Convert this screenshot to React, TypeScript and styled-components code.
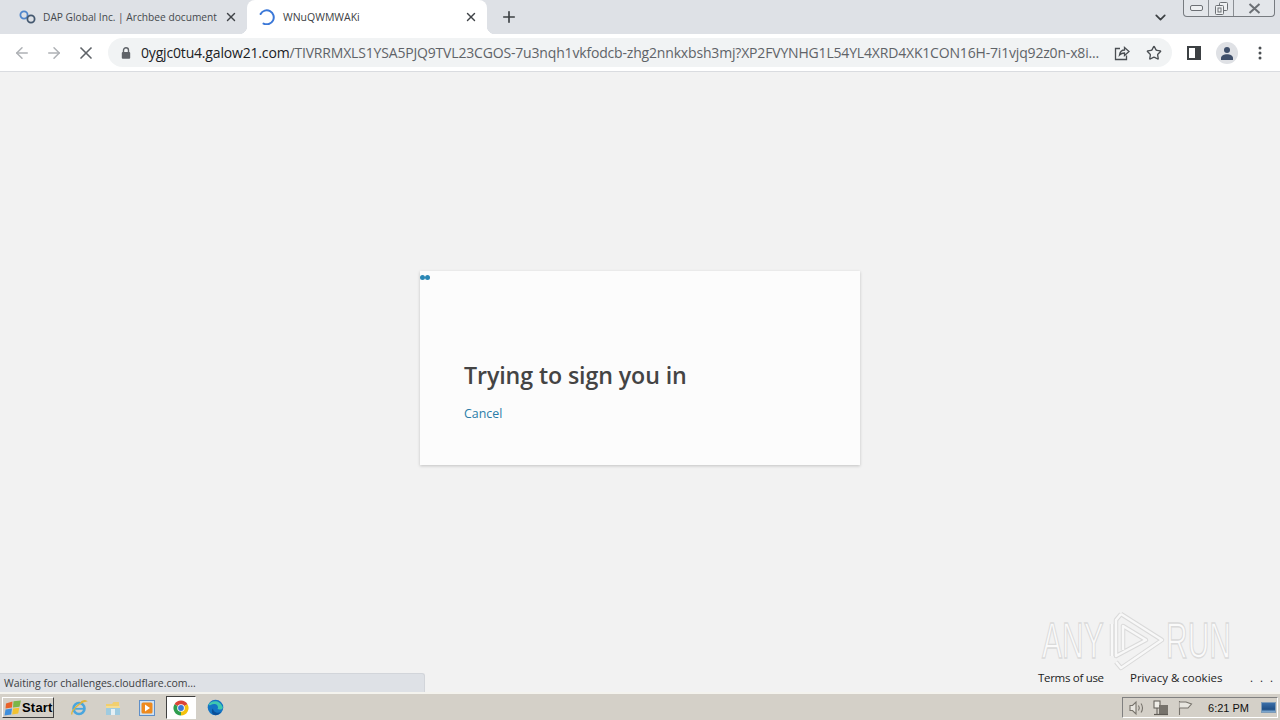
import styled, { createGlobalStyle } from "styled-components";
import { ArrowLeft, ArrowRight, ChevronDown, Plus, Star, X } from "lucide-react";

const GlobalStyle = createGlobalStyle`
  html, body {
    margin: 0;
    padding: 0;
    height: 100%;
    overflow: hidden;
  }
  #root {
    height: 100%;
  }
`;

const Page = styled.div`
  width: 1280px;
  height: 720px;
  display: flex;
  flex-direction: column;
  font-family: "Open Sans", "Noto Sans", sans-serif;
  background: #f2f2f2;
`;

const TabStrip = styled.div`
  height: 34px;
  flex: none;
  display: flex;
  align-items: stretch;
  padding-left: 8px;
  background: #dee1e6;
`;

const Tab = styled.div<{ $active?: boolean }>`
  position: relative;
  width: ${(p) => (p.$active ? 240 : 239)}px;
  box-sizing: border-box;
  display: flex;
  align-items: center;
  padding: 0 9px 0 ${(p) => (p.$active ? 12 : 11)}px;
  gap: ${(p) => (p.$active ? 8 : 7)}px;
  border-radius: 8px 8px 0 0;
  background: ${(p) => (p.$active ? "#ffffff" : "transparent")};
  ${(p) =>
    p.$active
      ? `
    &::before, &::after {
      content: "";
      position: absolute;
      bottom: 0;
      width: 8px;
      height: 8px;
    }
    &::before {
      left: -8px;
      background: radial-gradient(circle at 0 0, #dee1e6 8px, #fff 8.5px);
    }
    &::after {
      right: -8px;
      background: radial-gradient(circle at 100% 0, #dee1e6 8px, #fff 8.5px);
    }
  `
      : ""}
`;

const TabTitle = styled.span<{ $active?: boolean }>`
  flex: 1;
  font-family: "Open Sans", sans-serif;
  font-size: ${(p) => (p.$active ? 10.5 : 10.2)}px;
  color: ${(p) => (p.$active ? "#3c4043" : "#45494d")};
  white-space: nowrap;
`;

const TabClose = styled(X)`
  flex: none;
  color: #3f4347;
`;

const NewTab = styled.div`
  width: 44px;
  display: flex;
  align-items: center;
  justify-content: center;
  color: #3c4043;
`;

const StripSpacer = styled.div`
  flex: 1;
`;

const TabSearch = styled.div`
  width: 24px;
  margin-right: 11px;
  display: flex;
  align-items: center;
  justify-content: center;
  color: #3c4043;
`;

const WindowControls = styled.div`
  display: flex;
  width: 92px;
  height: 17px;
  box-sizing: border-box;
  margin-right: 5px;
  border: 1px solid #777b80;
  border-top: none;
  border-radius: 0 0 4px 4px;
  background: #e3e6ea;
`;

const WindowButton = styled.div<{ $wide?: boolean }>`
  width: ${(p) => (p.$wide ? 41 : 25)}px;
  display: flex;
  align-items: center;
  justify-content: center;
  & + & {
    border-left: 1px solid #8b8f94;
  }
`;

const Toolbar = styled.div`
  height: 37px;
  flex: none;
  display: flex;
  align-items: center;
  padding-left: 6px;
  background: #ffffff;
  border-bottom: 1px solid #dadce0;
`;

const NavButton = styled.div<{ $muted?: boolean }>`
  width: 32px;
  height: 32px;
  display: flex;
  align-items: center;
  justify-content: center;
  color: ${(p) => (p.$muted ? "#aeb1b5" : "#5f6368")};
`;

const Omnibox = styled.div`
  width: 1064px;
  height: 29px;
  margin-left: 6px;
  margin-right: 5px;
  display: flex;
  align-items: center;
  border-radius: 15px;
  background: #f1f3f4;
  padding-left: 12px;
  box-sizing: border-box;
`;

const UrlText = styled.div`
  flex: none;
  width: 960px;
  margin-left: 9px;
  margin-right: 5px;
  white-space: nowrap;
  font-family: "Open Sans", sans-serif;
  font-size: 14px;
  letter-spacing: -0.175px;
  color: #5f6368;
`;

const UrlHost = styled.span`
  color: #202124;
`;

const OmniAction = styled.div`
  width: 32px;
  flex: none;
  display: flex;
  align-items: center;
  justify-content: center;
  color: #4a4e52;
`;

const ToolSlot = styled.div`
  width: 33px;
  flex: none;
  display: flex;
  align-items: center;
  justify-content: center;
`;

const Avatar = styled.div`
  width: 22px;
  height: 22px;
  border-radius: 50%;
  background: #dfe1e5;
  display: flex;
  align-items: center;
  justify-content: center;
`;

const Content = styled.main`
  position: relative;
  flex: 1;
  display: flex;
  align-items: center;
  justify-content: center;
  padding-bottom: 28px;
  box-sizing: border-box;
`;

const Card = styled.section`
  position: relative;
  width: 440px;
  height: 194px;
  box-sizing: border-box;
  padding: 88px 44px 0;
  background: #fcfcfc;
  box-shadow: 0 1px 3px rgba(0, 0, 0, 0.2);
`;

const Dots = styled.div`
  position: absolute;
  left: 0;
  top: 4px;
  display: flex;
`;

const Dot = styled.i`
  display: block;
  width: 5px;
  height: 5px;
  border-radius: 50%;
  background: #2a86b4;
`;

const Title = styled.h1`
  margin: 0;
  font-family: "Open Sans", sans-serif;
  font-size: 23.2px;
  line-height: 32px;
  font-weight: 600;
  letter-spacing: -0.1px;
  color: #444444;
`;

const CancelLink = styled.a`
  display: block;
  margin-top: 14px;
  font-size: 12.4px;
  line-height: 18px;
  color: #2b7ca8;
`;

const Footer = styled.footer`
  position: absolute;
  left: 1038px;
  right: 0;
  bottom: 6px;
  display: flex;
  font-size: 11.5px;
  line-height: 16px;
  color: #1c1c1c;
`;

const FooterLink = styled.span<{ $width: number; $spacing?: number }>`
  width: ${(p) => p.$width}px;
  flex: none;
  white-space: nowrap;
  letter-spacing: ${(p) => p.$spacing ?? 0}px;
`;

const Watermark = styled.div`
  position: absolute;
  left: 1042px;
  top: 538px;
  display: flex;
  align-items: center;
  pointer-events: none;
`;

const WatermarkWord = styled.span<{ $width: number }>`
  width: ${(p) => p.$width}px;
  font-family: "Liberation Sans", sans-serif;
  font-size: 50px;
  line-height: 54px;
  display: inline-block;
  transform: scaleX(0.6);
  transform-origin: left center;
  color: rgba(255, 255, 255, 0.7);
  -webkit-text-stroke: 1.4px #dadada;
  white-space: nowrap;
`;

const Taskbar = styled.footer`
  height: 28px;
  flex: none;
  box-sizing: border-box;
  display: flex;
  align-items: center;
  background: #d4d0c8;
  border-top: 2px solid #f4f3ee;
  padding: 1px 2px 0;
`;

const StatusBubble = styled.div`
  position: absolute;
  left: 0;
  bottom: 0;
  width: 425px;
  height: 19px;
  box-sizing: border-box;
  padding: 0 4px;
  display: flex;
  align-items: center;
  font-size: 10.5px;
  color: #3c4043;
  background: #dee1e6;
  border: 1px solid #d2d5da;
  border-left: none;
  border-bottom: none;
  border-radius: 0 3px 0 0;
`;

const StartButton = styled.div`
  width: 52px;
  height: 21px;
  box-sizing: border-box;
  display: flex;
  align-items: center;
  padding-left: 1px;
  font-family: "Liberation Sans", sans-serif;
  font-size: 13px;
  font-weight: 700;
  letter-spacing: 0.2px;
  color: #000;
  background: #d4d0c8;
  border: 1px solid;
  border-color: #fff #404040 #404040 #fff;
`;

const QuickLaunch = styled.div`
  display: flex;
  align-items: center;
  margin-left: 8px;
  flex: 1;
`;

const TaskIcon = styled.div<{ $active?: boolean }>`
  width: ${(p) => (p.$active ? 30 : 34)}px;
  height: 23px;
  box-sizing: border-box;
  display: flex;
  align-items: center;
  justify-content: center;
  ${(p) =>
    p.$active
      ? "background: #fff; border: 1px solid; border-color: #404040 #fff #fff #404040; margin: 0 2px;"
      : ""}
`;

const Tray = styled.div`
  width: 156px;
  height: 21px;
  box-sizing: border-box;
  display: flex;
  align-items: center;
  padding-left: 2px;
  border: 1px solid;
  border-color: #808080 #fff #fff #808080;
`;

const TrayIcon = styled.div`
  width: 24px;
  flex: none;
  display: flex;
  align-items: center;
  justify-content: center;
`;

const Clock = styled.span`
  width: 52px;
  flex: none;
  text-align: right;
  font-family: "Liberation Sans", sans-serif;
  font-size: 11px;
  color: #111;
`;

const DesktopIcon = styled.div`
  margin-left: 12px;
  width: 15px;
  height: 11px;
  background: linear-gradient(#3a6ea8, #1f4f86 70%, #8fb8dc);
  border: 1px solid #7f9cb8;
  box-sizing: border-box;
`;

function LinkFavicon() {
  return (
    <svg width="17" height="14" viewBox="0 0 17 14" fill="none" strokeWidth="1.8">
      <circle cx="5" cy="5" r="3.6" stroke="#4f86cc" />
      <circle cx="12" cy="9" r="3.6" stroke="#44586f" />
    </svg>
  );
}

function Spinner() {
  return (
    <svg width="16" height="16" viewBox="0 0 16 16" fill="none">
      <path d="M2.5 13A7 7 0 1 0 3 3" stroke="#3b78d8" strokeWidth="2" strokeLinecap="round" transform="rotate(-20 8 8)" />
    </svg>
  );
}

function LockIcon() {
  return (
    <svg width="12" height="14" viewBox="0 0 12 14">
      <path d="M3.5 6V4.2a2.5 2.5 0 0 1 5 0V6" fill="none" stroke="#5f6368" strokeWidth="1.4" />
      <rect x="1.8" y="6" width="8.4" height="6.8" rx="1" fill="#5f6368" />
    </svg>
  );
}

function ShareIcon() {
  return (
    <svg width="16" height="16" viewBox="0 0 16 16" fill="none" stroke="currentColor" strokeWidth="1.3">
      <path d="M6 3.5H1.5V14.5H12.5V10.5" />
      <path d="M5.5 10C6 7 8 5 10.5 5V2.5L15 6.5 10.5 10.5V8C8.5 8 7 8.5 5.5 10Z" />
    </svg>
  );
}

function SidePanelIcon() {
  return (
    <svg width="14" height="14" viewBox="0 0 14 14">
      <rect x="1" y="1" width="12" height="12" fill="none" stroke="#3c4043" strokeWidth="2" />
      <rect x="8" y="1" width="5" height="12" fill="#3c4043" />
    </svg>
  );
}

function PersonIcon() {
  return (
    <svg width="14" height="14" viewBox="0 0 14 14" fill="#3f4f6a">
      <circle cx="7" cy="4" r="3" />
      <path d="M1 14V12C1 9.5 4 8.2 7 8.2S13 9.5 13 12V14Z" />
    </svg>
  );
}

function KebabIcon() {
  return (
    <svg width="4" height="14" viewBox="0 0 4 14" fill="#4a4e52">
      <circle cx="2" cy="2" r="1.5" />
      <circle cx="2" cy="7" r="1.5" />
      <circle cx="2" cy="12" r="1.5" />
    </svg>
  );
}

function WindowsFlag() {
  return (
    <svg width="18" height="16" viewBox="0 0 18 16">
      <path d="M2 3.5 8.5 1.5 8 7.5 1.5 8.5Z" fill="#e8622a" />
      <path d="M9.5 1.3 17 0.5 15.5 6.8 9 7.4Z" fill="#7ab648" />
      <path d="M1.5 9.5 8 8.5 7.2 14.5 0.5 15.5Z" fill="#3f8fdc" />
      <path d="M9 8.5 15.3 7.8 14.2 13.5 8.2 14.5Z" fill="#f2c230" />
    </svg>
  );
}

function IeIcon() {
  return (
    <svg width="18" height="18" viewBox="0 0 18 18" fill="none">
      <circle cx="9" cy="9.5" r="5.5" stroke="#4aa6de" strokeWidth="2.6" />
      <path d="M4 9.8H14" stroke="#4aa6de" strokeWidth="1.8" />
      <path d="M2 15.5C0.5 12 10 3 16 2 14 0.8 13 1.5 11 3" stroke="#e0b53a" strokeWidth="1.3" />
    </svg>
  );
}

function ExplorerIcon() {
  return (
    <svg width="18" height="18" viewBox="0 0 18 18">
      <path d="M2 5H8L9.5 3H15V8H2Z" fill="#f1cf6e" />
      <rect x="2" y="7" width="14" height="9" fill="#9fcbe0" />
      <rect x="7" y="10" width="4" height="6" fill="#e6f0f4" />
      <rect x="2" y="7" width="14" height="2" fill="#f4dc94" />
    </svg>
  );
}

function MediaIcon() {
  return (
    <svg width="16" height="16" viewBox="0 0 16 16">
      <rect x="0.5" y="0.5" width="15" height="15" fill="#cfe2f4" stroke="#5f8fc8" />
      <rect x="2.5" y="2.5" width="11" height="11" rx="1.5" fill="#ee8a1e" />
      <path d="M6 4.5 11 8 6 11.5Z" fill="#fff" />
    </svg>
  );
}

function ChromeIcon() {
  return (
    <svg width="16" height="16" viewBox="0 0 16 16">
      <path d="M8 8 1.5 4.2A7.5 7.5 0 0 1 14.5 4.2Z" fill="#db4437" />
      <path d="M8 8 14.5 4.2A7.5 7.5 0 0 1 8 15.5Z" fill="#f4c20d" />
      <path d="M8 8 8 15.5A7.5 7.5 0 0 1 1.5 4.2Z" fill="#2f9e4f" />
      <circle cx="8" cy="8" r="3.8" fill="#fff" />
      <circle cx="8" cy="8" r="2.9" fill="#3b78d8" />
    </svg>
  );
}

function EdgeIcon() {
  return (
    <svg width="17" height="17" viewBox="0 0 17 17">
      <circle cx="8.5" cy="8.5" r="7.8" fill="#1474c4" />
      <path d="M1.5 6C3 1.5 13 -0.5 15.8 8.5 16 10.5 12 11 10.5 10 12 8 10 4.5 7 5 4 5.5 2.5 7 1.5 6Z" fill="#3fc8b0" />
      <path d="M6 9.5C6 12.5 10 15 14 13 12.5 15.5 9.5 16.5 7.5 16 4 15 4.5 10.5 6 9.5Z" fill="#0b4f98" />
    </svg>
  );
}

function SpeakerIcon() {
  return (
    <svg width="18" height="16" viewBox="0 0 18 16" fill="none" stroke="#77736c" strokeWidth="1.1">
      <path d="M2 5.5H4.5L8 2V14L4.5 10.5H2Z" fill="#e8e6e0" />
      <path d="M10.5 5.5C11.5 7 11.5 9 10.5 10.5M13 3.5C15 6 15 10 13 12.5" />
    </svg>
  );
}

function NetworkIcon() {
  return (
    <svg width="16" height="16" viewBox="0 0 16 16">
      <rect x="1" y="1" width="6" height="7" fill="#f0eee8" stroke="#5f5b55" />
      <rect x="6" y="5" width="9" height="9" fill="#77736c" />
      <path d="M1 14.5H15" fill="none" stroke="#5f5b55" strokeWidth="1.2" />
      <rect x="3.5" y="8" width="1" height="6" fill="#5f5b55" />
    </svg>
  );
}

function FlagIcon() {
  return (
    <svg width="16" height="16" viewBox="0 0 16 16" fill="none" stroke="#77736c" strokeWidth="1.1">
      <path d="M2.5 1V15" />
      <path d="M2.5 2H9L14.5 4 11 8H2.5" fill="#e8e6e0" />
    </svg>
  );
}

function WatermarkLogo() {
  const shapes = (
    <>
      <path d="M4 14V46" />
      <path d="M13 4 54 30 13 58 8 52" />
      <path d="M13 4 8 10V46L38 30 15 16V40" />
    </>
  );
  return (
    <svg width="58" height="62" viewBox="0 0 58 62" fill="none" strokeLinejoin="round">
      <g stroke="#dadada" strokeWidth="4.5">{shapes}</g>
      <g stroke="#f8f8f8" strokeWidth="2.5">{shapes}</g>
    </svg>
  );
}

export default function App() {
  return (
    <>
      <GlobalStyle />
      <Page>
        <TabStrip>
          <Tab>
            <LinkFavicon />
            <TabTitle>DAP Global Inc. | Archbee document</TabTitle>
            <TabClose size={14} strokeWidth={2.4} />
          </Tab>
          <Tab $active>
            <Spinner />
            <TabTitle $active>WNuQWMWAKi</TabTitle>
            <TabClose size={14} strokeWidth={2.4} />
          </Tab>
          <NewTab>
            <Plus size={18} strokeWidth={2.2} />
          </NewTab>
          <StripSpacer />
          <TabSearch>
            <ChevronDown size={17} strokeWidth={2.4} />
          </TabSearch>
          <WindowControls>
            <WindowButton>
              <svg width="13" height="6" viewBox="0 0 13 6" fill="#eef0f2" stroke="#6c7075">
                <rect x="0.5" y="0.5" width="12" height="5" rx="1.5" />
              </svg>
            </WindowButton>
            <WindowButton>
              <svg width="13" height="13" viewBox="0 0 13 13" fill="#eef0f2" stroke="#6c7075">
                <rect x="4.5" y="0.5" width="8" height="8" rx="1" />
                <rect x="0.5" y="3.5" width="8" height="9" rx="1" />
                <rect x="3" y="6" width="3" height="4" />
              </svg>
            </WindowButton>
            <WindowButton $wide>
              <svg width="13" height="11" viewBox="0 0 13 11" fill="none" stroke="#6c7075" strokeWidth="2">
                <path d="M1.5 1 11.5 10M11.5 1 1.5 10" />
              </svg>
            </WindowButton>
          </WindowControls>
        </TabStrip>
        <Toolbar>
          <NavButton $muted>
            <ArrowLeft size={18} strokeWidth={2} />
          </NavButton>
          <NavButton $muted>
            <ArrowRight size={18} strokeWidth={2} />
          </NavButton>
          <NavButton>
            <X size={20} strokeWidth={2} />
          </NavButton>
          <Omnibox>
            <LockIcon />
            <UrlText>
              <UrlHost>0ygjc0tu4.galow21.com</UrlHost>
              /TIVRRMXLS1YSA5PJQ9TVL23CGOS-7u3nqh1vkfodcb-zhg2nnkxbsh3mj?XP2FVYNHG1L54YL4XRD4XK1CON16H-7i1vjq92z0n-x8i...
            </UrlText>
            <OmniAction>
              <ShareIcon />
            </OmniAction>
            <OmniAction>
              <Star size={16} strokeWidth={2} />
            </OmniAction>
          </Omnibox>
          <ToolSlot>
            <SidePanelIcon />
          </ToolSlot>
          <ToolSlot>
            <Avatar>
              <PersonIcon />
            </Avatar>
          </ToolSlot>
          <ToolSlot>
            <KebabIcon />
          </ToolSlot>
        </Toolbar>
        <Content>
          <Card>
            <Dots>
              <Dot />
              <Dot />
            </Dots>
            <Title>Trying to sign you in</Title>
            <CancelLink>Cancel</CancelLink>
          </Card>
          <Watermark>
            <WatermarkWord $width={66}>ANY</WatermarkWord>
            <WatermarkLogo />
            <WatermarkWord $width={64}>RUN</WatermarkWord>
          </Watermark>
          <Footer>
            <FooterLink $width={92} $spacing={-0.3}>Terms of use</FooterLink>
            <FooterLink $width={120}>Privacy &amp; cookies</FooterLink>
            <FooterLink $width={30} $spacing={2}>. . .</FooterLink>
          </Footer>
          <StatusBubble>Waiting for challenges.cloudflare.com...</StatusBubble>
        </Content>
        <Taskbar>
          <StartButton>
            <WindowsFlag />
            Start
          </StartButton>
          <QuickLaunch>
            <TaskIcon><IeIcon /></TaskIcon>
            <TaskIcon><ExplorerIcon /></TaskIcon>
            <TaskIcon><MediaIcon /></TaskIcon>
            <TaskIcon $active><ChromeIcon /></TaskIcon>
            <TaskIcon><EdgeIcon /></TaskIcon>
          </QuickLaunch>
          <Tray>
            <TrayIcon><SpeakerIcon /></TrayIcon>
            <TrayIcon><NetworkIcon /></TrayIcon>
            <TrayIcon><FlagIcon /></TrayIcon>
            <Clock>6:21 PM</Clock>
            <DesktopIcon />
          </Tray>
        </Taskbar>
      </Page>
    </>
  );
}
